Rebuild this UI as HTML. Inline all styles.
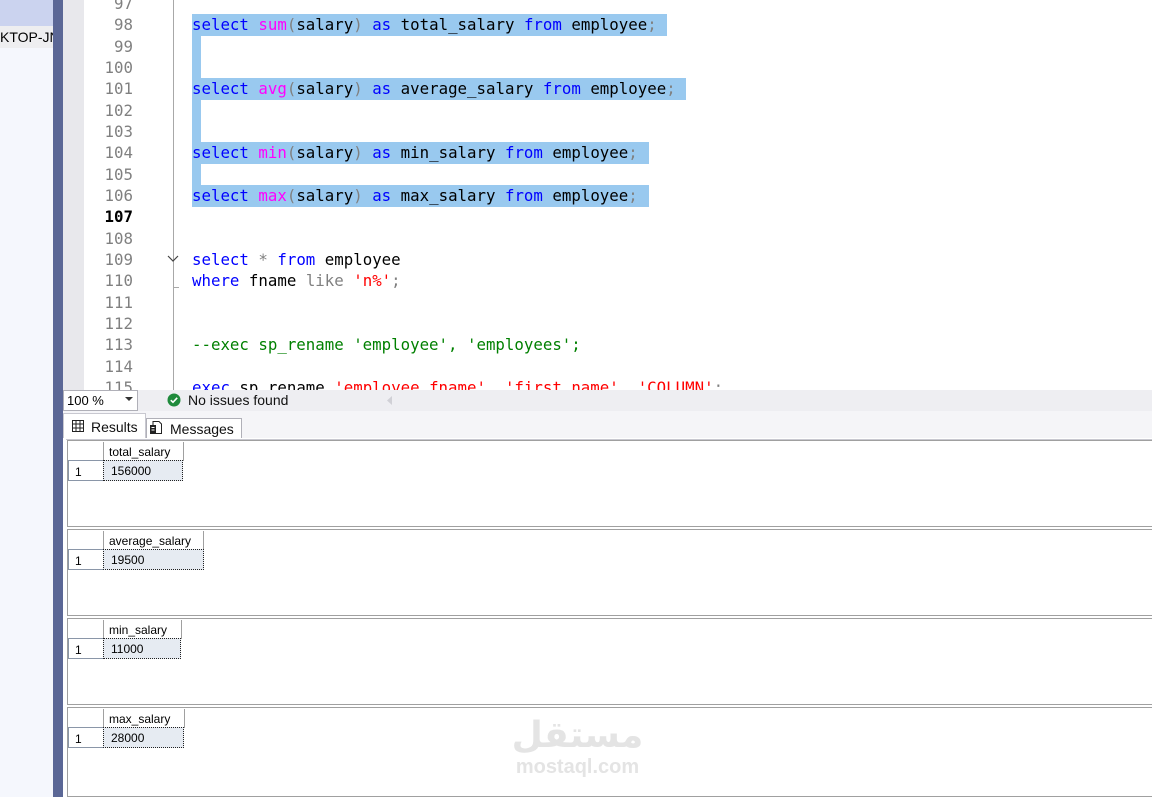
<!DOCTYPE html>
<html><head><meta charset="utf-8"><style>
*{margin:0;padding:0;box-sizing:border-box}
body{width:1152px;height:797px;overflow:hidden;background:#fff;position:relative;font-family:"Liberation Sans",sans-serif}
.a{position:absolute}
.code{font-family:"DejaVu Sans Mono",monospace;font-size:15.75px;line-height:21.33px;white-space:pre}
.k{color:#0000ff}.f{color:#ff00ff}.g{color:#808080}.s{color:#ff0000}.c{color:#008000}.t{color:#000}
.ln{font-family:"DejaVu Sans Mono",monospace;font-size:15.75px;line-height:21.33px;color:#808080;text-align:right;width:50px}
.sel{background:#99c9ef}
.pane{position:absolute;left:67px;right:-2px;border:1px solid #a0a0a0;background:#fff}
.hc{position:absolute;font-size:12px;color:#000}
</style></head><body>
<div class="a" style="left:0;top:0;width:53px;height:797px;background:#f5f7fd"></div>
<div class="a" style="left:0;top:0;width:53px;height:26px;background:#cbd3ef"></div>
<div class="a" style="left:0;top:26px;width:53px;height:22px;background:#eeeef0;font-size:14px;line-height:22px;color:#000;overflow:hidden;white-space:nowrap">KTOP-JN</div>
<div class="a" style="left:53px;top:0;width:10px;height:797px;background:#5b6796"></div>
<div class="a" style="left:63px;top:0;width:21px;height:390px;background:#e8e8ec"></div>
<div class="a" style="left:173px;top:0;width:1px;height:390px;background:#a8a8a8"></div>
<div class="a sel" style="left:192px;top:14px;width:475px;height:22px"></div>
<div class="a sel" style="left:192px;top:36px;width:9px;height:42px"></div>
<div class="a sel" style="left:192px;top:78px;width:494px;height:22px"></div>
<div class="a sel" style="left:192px;top:100px;width:9px;height:42px"></div>
<div class="a sel" style="left:192px;top:142px;width:457px;height:22px"></div>
<div class="a sel" style="left:192px;top:164px;width:9px;height:21px"></div>
<div class="a sel" style="left:192px;top:185px;width:457px;height:22px"></div>
<div class="a ln" style="left:83px;top:-7px">97<br>98<br>99<br>100<br>101<br>102<br>103<br>104<br>105<br>106<br><b style="color:#000">107</b><br>108<br>109<br>110<br>111<br>112<br>113<br>114<br>115</div>
<svg class="a" style="left:166px;top:253px" width="14" height="12"><path d="M2 3 L7 8 L12 3" stroke="#444" fill="none" stroke-width="1.2"/></svg>
<div class="a" style="left:174px;top:287px;width:5px;height:1px;background:#a8a8a8"></div>
<div class="a code" style="left:192px;top:-7px">
<span class="k">select</span> <span class="f">sum</span><span class="g">(</span><span class="t">salary</span><span class="g">)</span> <span class="k">as</span> <span class="t">total_salary</span> <span class="k">from</span> <span class="t">employee</span><span class="g">;</span>


<span class="k">select</span> <span class="f">avg</span><span class="g">(</span><span class="t">salary</span><span class="g">)</span> <span class="k">as</span> <span class="t">average_salary</span> <span class="k">from</span> <span class="t">employee</span><span class="g">;</span>


<span class="k">select</span> <span class="f">min</span><span class="g">(</span><span class="t">salary</span><span class="g">)</span> <span class="k">as</span> <span class="t">min_salary</span> <span class="k">from</span> <span class="t">employee</span><span class="g">;</span>

<span class="k">select</span> <span class="f">max</span><span class="g">(</span><span class="t">salary</span><span class="g">)</span> <span class="k">as</span> <span class="t">max_salary</span> <span class="k">from</span> <span class="t">employee</span><span class="g">;</span>


<span class="k">select</span> <span class="g">*</span> <span class="k">from</span> <span class="t">employee</span>
<span class="k">where</span> <span class="t">fname</span> <span class="g">like</span> <span class="s">'n%'</span><span class="g">;</span>


<span class="c">--exec sp_rename 'employee', 'employees';</span>

<span class="k">exec</span> <span class="t">sp_rename</span> <span class="s">'employee.fname'</span><span class="g">,</span> <span class="s">'first_name'</span><span class="g">,</span> <span class="s">'COLUMN'</span><span class="g">;</span></div>
<div class="a" style="left:63px;top:390px;width:1089px;height:21px;background:#eeeef2"></div>
<div class="a" style="left:63px;top:390px;width:75px;height:21px;background:#fff;border:1px solid #b0b0b8;font-size:13px;line-height:19px;padding-left:3px">100 %</div>
<svg class="a" style="left:125px;top:397px" width="9" height="6"><path d="M0 0 H8 L4 4Z" fill="#333"/></svg>
<svg class="a" style="left:167px;top:393px" width="14" height="14"><circle cx="7" cy="7" r="6.5" fill="#1f8a3c"/><path d="M3.8 7.2 L6 9.3 L10.2 4.8" stroke="#fff" stroke-width="1.6" fill="none"/></svg>
<div class="a" style="left:188px;top:390px;font-size:14px;line-height:21px;color:#111">No issues found</div>
<svg class="a" style="left:386px;top:395px" width="8" height="11"><path d="M6 1 L1 5.5 L6 10Z" fill="#d0d0d6"/></svg>
<div class="a" style="left:63px;top:411px;width:1089px;height:386px;background:#f5f5f8"></div>
<div class="a" style="left:63px;top:413px;width:83px;height:26px;background:#fff;border:1px solid #c8c8d0;border-bottom:none"></div>
<svg class="a" style="left:72px;top:420px" width="12" height="12"><path d="M.5 .5H11.5V11.5H.5ZM.5 4H11.5M.5 8H11.5M4 .5V11.5M8 .5V11.5" stroke="#222" fill="none"/></svg>
<div class="a" style="left:91px;top:419px;font-size:14px;color:#111">Results</div>
<div class="a" style="left:146px;top:418px;width:96px;height:21px;background:#fff;border:1px solid #b0b0b8;border-bottom:none"></div>
<svg class="a" style="left:149px;top:420px" width="14" height="15"><path d="M4 1.5H10L12.5 4V13.5H4Z" stroke="#222" fill="none"/><rect x="1" y="5" width="6" height="9" fill="#222"/><path d="M2.5 7.5H5.5M2.5 10H5.5" stroke="#fff"/></svg>
<div class="a" style="left:170px;top:421px;font-size:14px;color:#111">Messages</div>
<div class="a" style="left:63px;top:438px;width:1089px;height:359px;background:#fff"></div>
<div class="a" style="left:66px;top:439px;width:1090px;height:1px;background:#c8c8d0"></div>
<div class="pane" style="top:440px;height:87px"></div>
<div class="pane" style="top:529px;height:87px"></div>
<div class="pane" style="top:618px;height:87px"></div>
<div class="pane" style="top:707px;height:90px"></div>

<div class="a" style="left:103px;top:442px;width:81px;height:19px;border-right:1px solid #a0a0a0;border-left:1px solid #a0a0a0"></div>
<div class="hc" style="left:109px;top:445px">total_salary</div>
<div class="a" style="left:68px;top:460px;width:36px;height:21px;border:1px solid #8a96a8"></div>
<div class="hc" style="left:75px;top:465px">1</div>
<div class="a" style="left:103px;top:460px;width:80px;height:21px;background:#e6ebf2;border:1px dotted #222"></div>
<div class="hc" style="left:111px;top:464px">156000</div>

<div class="a" style="left:103px;top:531px;width:101px;height:19px;border-right:1px solid #a0a0a0;border-left:1px solid #a0a0a0"></div>
<div class="hc" style="left:109px;top:534px">average_salary</div>
<div class="a" style="left:68px;top:549px;width:36px;height:21px;border:1px solid #8a96a8"></div>
<div class="hc" style="left:75px;top:554px">1</div>
<div class="a" style="left:103px;top:549px;width:101px;height:21px;background:#e6ebf2;border:1px dotted #222"></div>
<div class="hc" style="left:111px;top:553px">19500</div>

<div class="a" style="left:103px;top:620px;width:79px;height:19px;border-right:1px solid #a0a0a0;border-left:1px solid #a0a0a0"></div>
<div class="hc" style="left:109px;top:623px">min_salary</div>
<div class="a" style="left:68px;top:638px;width:36px;height:21px;border:1px solid #8a96a8"></div>
<div class="hc" style="left:75px;top:643px">1</div>
<div class="a" style="left:103px;top:638px;width:78px;height:21px;background:#e6ebf2;border:1px dotted #222"></div>
<div class="hc" style="left:111px;top:642px">11000</div>

<div class="a" style="left:103px;top:709px;width:82px;height:19px;border-right:1px solid #a0a0a0;border-left:1px solid #a0a0a0"></div>
<div class="hc" style="left:109px;top:712px">max_salary</div>
<div class="a" style="left:68px;top:727px;width:36px;height:21px;border:1px solid #8a96a8"></div>
<div class="hc" style="left:75px;top:732px">1</div>
<div class="a" style="left:103px;top:727px;width:81px;height:21px;background:#e6ebf2;border:1px dotted #222"></div>
<div class="hc" style="left:111px;top:731px">28000</div>

<div class="a" style="left:505px;top:712px;width:145px;text-align:center;font-family:'DejaVu Sans',sans-serif;font-weight:bold;font-size:36px;line-height:48px;color:#e4e4e4">مستقل</div>
<div class="a" style="left:505px;top:756px;width:145px;text-align:center;font-weight:bold;font-size:20px;color:#e4e4e4">mostaql.com</div>
</body></html>
